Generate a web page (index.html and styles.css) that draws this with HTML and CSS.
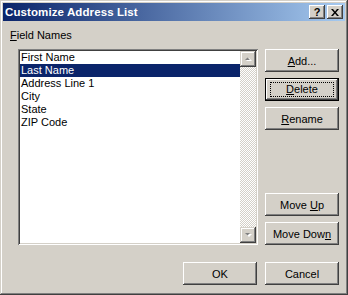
FILE: index.html
```html
<!DOCTYPE html>
<html>
<head>
<meta charset="utf-8">
<link rel="stylesheet" href="styles.css">
</head>
<body>
<div class="window">
  <div class="titlebar">
    <span class="title">Customize Address List</span>
    <span class="tbtn help">?</span>
    <span class="tbtn close">
      <svg width="8" height="7" viewBox="0 0 8 7"><path d="M0 0h2l2 2.5L6 0h2L5 3.5 8 7H6L4 4.5 2 7H0l3-3.5z" fill="#000"/></svg>
    </span>
  </div>
  <div class="content">
    <div class="label"><u>F</u>ield Names</div>
    <div class="main">
      <div class="list">
        <div class="items">
          <div class="item">First Name</div>
          <div class="item selected">Last Name</div>
          <div class="item">Address Line 1</div>
          <div class="item">City</div>
          <div class="item">State</div>
          <div class="item">ZIP Code</div>
        </div>
        <div class="scrollbar">
          <div class="sbtn">
            <svg width="7" height="5" viewBox="0 0 7 5"><path d="M1 4h6L4 1z" fill="#fff"/><path d="M0 3h5L2.5 0.5z" fill="#808080"/></svg>
          </div>
          <div class="track"></div>
          <div class="sbtn">
            <svg width="7" height="5" viewBox="0 0 7 5"><path d="M1 1h6L4 4z" fill="#fff"/><path d="M0 0h5L2.5 2.5z" fill="#808080"/></svg>
          </div>
        </div>
      </div>
      <div class="side">
        <div class="btn"><span><u>A</u>dd...</span></div>
        <div class="btn default"><span class="focus"><u>D</u>elete</span></div>
        <div class="btn"><span><u>R</u>ename</span></div>
        <div class="spacer"></div>
        <div class="btn"><span>Move <u>U</u>p</span></div>
        <div class="btn"><span>Move Dow<u>n</u></span></div>
      </div>
    </div>
    <div class="footer">
      <div class="btn"><span>OK</span></div>
      <div class="btn"><span>Cancel</span></div>
    </div>
  </div>
</div>
</body>
</html>
```
FILE: styles.css
```css
html, body {
  margin: 0;
  padding: 0;
  background: #d4d0c8;
}
body {
  font-family: "Liberation Sans", Arial, sans-serif;
  font-size: 11px;
  color: #000;
}
.window {
  width: 348px;
  height: 295px;
  box-sizing: border-box;
  background: #d4d0c8;
  padding: 3px;
  box-shadow: inset -1px -1px #404040, inset 1px 1px #d4d0c8, inset -2px -2px #808080, inset 2px 2px #fff;
  display: flex;
  flex-direction: column;
}
.titlebar {
  height: 18px;
  background: linear-gradient(to right, #0a246a, #a6caf0);
  display: flex;
  align-items: center;
  padding-left: 2px;
}
.title {
  color: #fff;
  font-weight: bold;
  font-size: 11.5px;
  letter-spacing: 0.1px;
  flex: 1;
}
.tbtn {
  width: 16px;
  height: 14px;
  box-sizing: border-box;
  background: #d4d0c8;
  box-shadow: inset -1px -1px #404040, inset 1px 1px #fff, inset -2px -2px #808080, inset 2px 2px #d4d0c8;
  display: flex;
  align-items: center;
  justify-content: center;
  margin-right: 2px;
}
.help {
  font-weight: bold;
  font-size: 11px;
  line-height: 14px;
  padding-bottom: 1px;
}
.close svg { display: block; margin-left: -1px; }
.content {
  flex: 1;
  padding: 8px 0 0 7px;
  display: flex;
  flex-direction: column;
}
.label {
  line-height: 13px;
  height: 13px;
}
.main {
  display: flex;
  margin-top: 7px;
}
.list {
  margin-left: 8px;
  width: 240px;
  height: 196px;
  box-sizing: border-box;
  padding: 2px;
  background: #fff;
  box-shadow: inset 1px 1px #808080, inset -1px -1px #fff, inset 2px 2px #404040, inset -2px -2px #d4d0c8;
  display: flex;
}
.items {
  flex: 1;
}
.item {
  height: 13px;
  line-height: 13px;
  padding-left: 1px;
  white-space: nowrap;
}
.item.selected {
  background: #0a246a;
  color: #fff;
}
.scrollbar {
  width: 16px;
  display: flex;
  flex-direction: column;
}
.sbtn {
  width: 16px;
  height: 16px;
  box-sizing: border-box;
  background: #d4d0c8;
  box-shadow: inset -1px -1px #404040, inset 1px 1px #d4d0c8, inset -2px -2px #808080, inset 2px 2px #fff;
  display: flex;
  align-items: center;
  justify-content: center;
}
.sbtn svg { display: block; }
.track {
  flex: 1;
  background: repeating-conic-gradient(#fff 0 25%, #d4d0c8 0 50%) 0 0 / 2px 2px;
}
.side {
  margin-left: 7px;
  width: 74px;
  display: flex;
  flex-direction: column;
  gap: 6px;
}
.spacer { flex: 1; }
.btn {
  width: 74px;
  height: 23px;
  box-sizing: border-box;
  background: #d4d0c8;
  box-shadow: inset -1px -1px #404040, inset 1px 1px #fff, inset -2px -2px #808080, inset 2px 2px #d4d0c8;
  display: flex;
  align-items: center;
  justify-content: center;
  white-space: nowrap;
}
.btn.default {
  box-shadow: inset 0 0 0 1px #000, inset -2px -2px #404040, inset 2px 2px #fff, inset -3px -3px #808080;
}
.focus {
  box-sizing: border-box;
  width: 64px;
  height: 15px;
  line-height: 13px;
  text-align: center;
  border: 1px dotted #000;
}
.footer {
  display: flex;
  justify-content: flex-end;
  gap: 8px;
  padding-right: 6px;
  margin-top: 17px;
}
```
